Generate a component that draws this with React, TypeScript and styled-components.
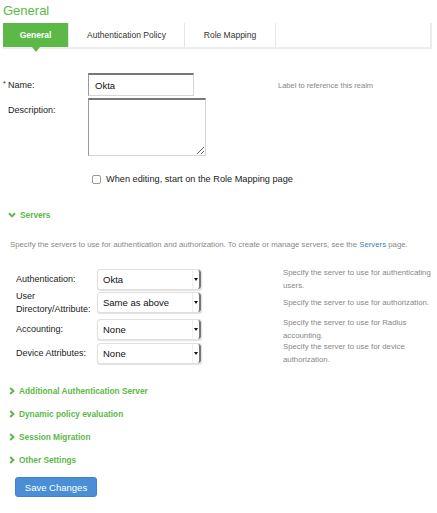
import styled, { createGlobalStyle } from "styled-components";

const GREEN = "#5cb947";

const GlobalStyle = createGlobalStyle`
  html, body {
    margin: 0;
    padding: 0;
    background: #fff;
  }
  body {
    font-family: "Liberation Sans", Arial, Helvetica, sans-serif;
    color: #222;
  }
`;

const tabs = ["General", "Authentication Policy", "Role Mapping"];

const servers = [
  { label: "Authentication:", value: "Okta", hint: "Specify the server to use for authenticating users.", tall: false },
  { label: "User Directory/Attribute:", value: "Same as above", hint: "Specify the server to use for authorization.", tall: true },
  { label: "Accounting:", value: "None", hint: "Specify the server to use for Radius accounting.", tall: false },
  { label: "Device Attributes:", value: "None", hint: "Specify the server to use for device authorization.", tall: false },
];

const sections = [
  "Additional Authentication Server",
  "Dynamic policy evaluation",
  "Session Migration",
  "Other Settings",
];

const ChevronDown = () => (
  <svg width="8" height="6" viewBox="0 0 8 6">
    <path d="M1 1.2 L4 4.4 L7 1.2" fill="none" stroke={GREEN} strokeWidth="2" />
  </svg>
);

const ChevronRight = () => (
  <svg width="6" height="8" viewBox="0 0 6 8">
    <path d="M1.2 1 L4.4 4 L1.2 7" fill="none" stroke={GREEN} strokeWidth="2" />
  </svg>
);

const App: React.FC = () => {
  return (
    <>
      <GlobalStyle />
      <Root>
        <PageTitle>General</PageTitle>
        <TabBar>
          {tabs.map((t, i) => (
            <Tab key={t} $active={i === 0} $width={i === 0 ? 66 : i === 1 ? 116 : 91}>
              {t}
            </Tab>
          ))}
          <TabFiller />
        </TabBar>

        <Form>
          <FieldRow>
            <FieldLabel>
              <Required>*</Required>Name:
            </FieldLabel>
            <TextInput defaultValue="Okta" />
            <Hint $left={84}>Label to reference this realm</Hint>
          </FieldRow>
          <FieldRow>
            <FieldLabel>Description:</FieldLabel>
            <TextArea />
          </FieldRow>
          <CheckRow>
            <CheckBox type="checkbox" />
            <CheckText>When editing, start on the Role Mapping page</CheckText>
          </CheckRow>
        </Form>

        <SectionHeader $top={25}>
          <ChevronDown />
          Servers
        </SectionHeader>
        <Intro>
          Specify the servers to use for authentication and authorization. To create or manage servers, see the{" "}
          <Link>Servers</Link> page.
        </Intro>

        <ServerGrid>
          {servers.map((s) => (
            <ServerRow key={s.label} $tall={s.tall}>
              <ServerLabel>{s.label}</ServerLabel>
              <SelectBox>
                <span>{s.value}</span>
                <SelectHandle>
                  <svg width="4" height="3" viewBox="0 0 4 3">
                    <path d="M0 0 H4 L2 3 Z" fill="#111" />
                  </svg>
                </SelectHandle>
              </SelectBox>
              <ServerHint>{s.hint}</ServerHint>
            </ServerRow>
          ))}
        </ServerGrid>

        <Sections>
          {sections.map((s) => (
            <SectionHeader key={s} $top={0}>
              <ChevronRight />
              {s}
            </SectionHeader>
          ))}
        </Sections>

        <SaveButton>Save Changes</SaveButton>
      </Root>
    </>
  );
};

const Root = styled.div`
  width: 437px;
  height: 513px;
  padding: 3px 5px 0 3px;
  box-sizing: border-box;
  overflow: hidden;
`;

const PageTitle = styled.h1`
  margin: 0;
  font-size: 13px;
  font-weight: normal;
  line-height: 15px;
  color: ${GREEN};
`;

const TabBar = styled.div`
  display: flex;
  margin-top: 5px;
  height: 24px;
  width: 429px;
  border-bottom: 2px solid #ececec;
`;

const Tab = styled.div<{ $active: boolean; $width: number }>`
  position: relative;
  width: ${({ $width }) => $width}px;
  display: flex;
  align-items: center;
  justify-content: center;
  font-size: 8.5px;
  font-weight: ${({ $active }) => ($active ? "bold" : "normal")};
  color: ${({ $active }) => ($active ? "#fff" : "#333")};
  background: ${({ $active }) => ($active ? GREEN : "#fff")};
  border-right: 1px solid #e6e6e6;
  box-sizing: border-box;

  &::after {
    content: "";
    display: ${({ $active }) => ($active ? "block" : "none")};
    position: absolute;
    left: 50%;
    bottom: -5px;
    margin-left: -4px;
    border-left: 4px solid transparent;
    border-right: 4px solid transparent;
    border-top: 5px solid ${GREEN};
  }
`;

const TabFiller = styled.div`
  flex: 1;
  border-right: 2px solid #ececec;
`;

const Form = styled.div`
  display: flex;
  flex-direction: column;
  margin-top: 24px;
`;

const FieldRow = styled.div`
  display: flex;
  align-items: flex-start;
  margin-bottom: 2px;
`;

const FieldLabel = styled.label`
  width: 85px;
  padding-left: 5px;
  box-sizing: border-box;
  font-size: 9px;
  line-height: 11px;
  padding-top: 7px;
  position: relative;
`;

const Required = styled.span`
  position: absolute;
  left: 0;
  top: 5px;
  font-size: 7px;
`;

const TextInput = styled.input`
  width: 106px;
  height: 23px;
  box-sizing: border-box;
  border: 1px solid #d6d6d6;
  border-top: 2px solid #777;
  border-left: 1px solid #999;
  padding: 0 6px;
  font-family: inherit;
  font-size: 9.5px;
  color: #111;
  outline: none;
`;

const TextArea = styled.textarea`
  width: 118px;
  height: 58px;
  box-sizing: border-box;
  border: 1px solid #d6d6d6;
  border-top: 2px solid #777;
  border-left: 1px solid #999;
  margin: 0;
  font-family: inherit;
  outline: none;
`;

const Hint = styled.span<{ $left: number }>`
  margin-left: ${({ $left }) => $left}px;
  padding-top: 8px;
  font-size: 7.5px;
  color: #888;
`;

const CheckRow = styled.label`
  display: flex;
  align-items: center;
  gap: 5px;
  margin: 16px 0 0 89px;
`;

const CheckBox = styled.input`
  width: 9px;
  height: 9px;
  margin: 0;
  appearance: none;
  border: 1px solid #999;
  border-radius: 2px;
  background: #fff;
`;

const CheckText = styled.span`
  font-size: 9.2px;
  color: #222;
`;

const SectionHeader = styled.div<{ $top: number }>`
  display: flex;
  align-items: center;
  gap: 4px;
  margin-top: ${({ $top }) => $top}px;
  padding-left: 5px;
  height: 12px;
  font-size: 8.3px;
  font-weight: bold;
  color: ${GREEN};
`;

const Intro = styled.p`
  margin: 18px 0 0 7px;
  font-size: 7.8px;
  line-height: 12px;
  color: #888;
  white-space: nowrap;
`;

const Link = styled.a`
  color: #3a7fc4;
`;

const ServerGrid = styled.div`
  display: flex;
  flex-direction: column;
  gap: 3px;
  margin-top: 15px;
  padding-left: 13px;
`;

const ServerRow = styled.div<{ $tall: boolean }>`
  display: grid;
  grid-template-columns: 81px 105px 1fr;
  align-items: center;
  height: ${({ $tall }) => ($tall ? 23 : 21)}px;
`;

const ServerLabel = styled.div`
  font-size: 9px;
  line-height: 12.5px;
  color: #222;
`;

const SelectBox = styled.div`
  height: 21px;
  box-sizing: border-box;
  display: flex;
  align-items: center;
  justify-content: space-between;
  padding-left: 5px;
  border: 1px solid #e0e0e0;
  border-radius: 3px;
  box-shadow: 0 1px 1px rgba(0, 0, 0, 0.12);
  font-size: 9.5px;
  color: #111;
  background: #fff;
`;

const SelectHandle = styled.span`
  width: 9px;
  height: 100%;
  display: flex;
  align-items: center;
  justify-content: center;
  border-left: 1px solid #eee;
  border-right: 2px solid #777;
  border-radius: 0 3px 3px 0;
  box-sizing: border-box;
`;

const ServerHint = styled.div`
  padding-left: 81px;
  width: 240px;
  box-sizing: border-box;
  font-size: 7.8px;
  line-height: 13px;
  color: #888;
`;

const Sections = styled.div`
  display: flex;
  flex-direction: column;
  gap: 11px;
  margin-top: 24px;
  padding-left: 1px;
`;

const SaveButton = styled.button`
  display: block;
  margin: 11px 0 0 12px;
  width: 82px;
  height: 20px;
  padding: 0;
  border: 1px solid #3f82c9;
  border-radius: 3px;
  background: #4a8fd6;
  color: #fff;
  font-family: inherit;
  font-size: 9.5px;
`;

export default App;
